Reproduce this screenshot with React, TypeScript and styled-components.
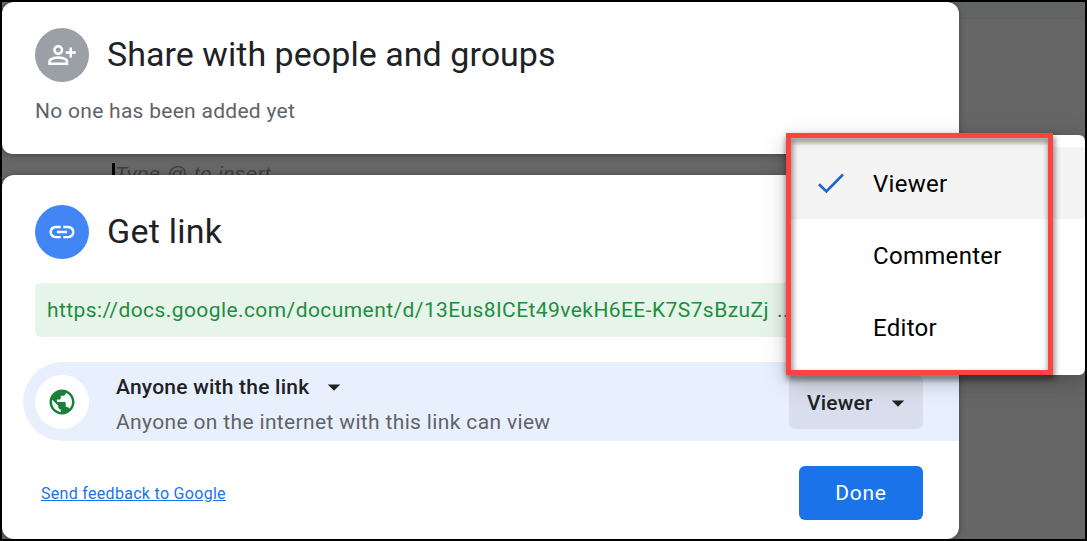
import React from "react";
import styled, { createGlobalStyle } from "styled-components";
import { MdArrowDropDown, MdLink, MdOutlinePersonAddAlt, MdPublic } from "react-icons/md";

const GlobalStyle = createGlobalStyle`
  * { box-sizing: border-box; }
  body { margin: 0; background: #000; font-family: Roboto, "Liberation Sans", sans-serif; }
  button { font-family: inherit; border: 0; padding: 0; background: none; }
`;

const Screen = styled.div`
  position: relative;
  width: 1087px;
  height: 541px;
  border: 2px solid #000;
  background: linear-gradient(#626563 0 16px, #5f605f 16px 17px, #666 17px);
  overflow: hidden;
`;

const Dialogs = styled.div`
  width: 957px;
  display: flex;
  flex-direction: column;
`;

const Card = styled.section<{ $height: number }>`
  position: relative;
  height: ${(p) => p.$height}px;
  border-radius: 12px;
  background: #fff;
  box-shadow: 0 1px 6px rgba(0, 0, 0, 0.35);
`;

const ShareCard = styled(Card)`
  padding: 26px 33px 0;
  border-bottom-left-radius: 10px;
`;

const LinkCard = styled(Card)`
  padding-top: 30px;
  display: flex;
  flex-direction: column;
`;

const DocumentLine = styled.div`
  height: 21px;
  padding: 9px 0 0 110px;
  display: flex;
`;

const Caret = styled.span`
  width: 3px;
  height: 24px;
  flex: none;
  background: #000;
`;

const Placeholder = styled.span`
  font: italic 20px/22px "Liberation Sans", sans-serif;
  letter-spacing: 0.65px;
  color: #3c3d3e;
  white-space: nowrap;
`;

const Heading = styled.header`
  display: flex;
  align-items: center;
  gap: 18px;
  height: 54px;
`;

const LinkHeading = styled(Heading)`
  padding-left: 33px;
`;

const Disc = styled.span<{ $bg: string; $fg: string }>`
  width: 54px;
  height: 54px;
  flex: none;
  border-radius: 50%;
  display: flex;
  align-items: center;
  justify-content: center;
  background: ${(p) => p.$bg};
  color: ${(p) => p.$fg};
`;

const Title = styled.h2<{ $spacing: number }>`
  margin: 0;
  padding-bottom: 2px;
  font-size: 34px;
  font-weight: 400;
  line-height: 48px;
  letter-spacing: ${(p) => p.$spacing}px;
  color: #202124;
  white-space: nowrap;
`;

const Note = styled.p`
  margin: 14px 0 0;
  font-size: 21px;
  line-height: 30px;
  letter-spacing: 0.28px;
  color: #5f6368;
`;

const UrlBox = styled.div`
  margin: 24px 36px 0 33px;
  height: 54px;
  padding-left: 12px;
  border-radius: 6px;
  background: #e6f4ea;
  display: flex;
  align-items: center;
  gap: 8px;
  font-size: 21px;
  letter-spacing: 0.42px;
  color: #1e8e3e;
  white-space: nowrap;
`;

const AccessRow = styled.div`
  margin: 25px 0 0 21px;
  height: 79px;
  padding: 0 36px 0 12px;
  border-radius: 40px 0 0 40px;
  background: #e8f0fe;
  display: flex;
  align-items: center;
`;

const AccessText = styled.div`
  flex: 1;
  margin-left: 27px;
  padding-top: 6px;
`;

const AccessScope = styled.button`
  display: flex;
  align-items: center;
  gap: 10px;
  height: 30px;
  font-size: 21px;
  font-weight: 500;
  letter-spacing: 0.22px;
  color: #202124;
`;

const AccessHint = styled.div`
  margin-top: 5px;
  height: 30px;
  font-size: 21px;
  line-height: 30px;
  letter-spacing: 0.35px;
  color: #5f6368;
`;

const RoleButton = styled.button`
  width: 134px;
  height: 54px;
  padding: 2px 0 0 18px;
  border-radius: 6px;
  background: #d8deeb;
  display: flex;
  align-items: center;
  gap: 10px;
  font-size: 21px;
  font-weight: 500;
  letter-spacing: 0.2px;
  color: #202124;
`;

const Footer = styled.footer`
  margin-top: 25px;
  padding: 0 36px 0 39px;
  display: flex;
  align-items: center;
  justify-content: space-between;
`;

const FeedbackLink = styled.a`
  font-size: 16px;
  letter-spacing: 0.3px;
  color: #1a73e8;
  text-decoration: underline;
`;

const DoneButton = styled.button`
  width: 124px;
  height: 54px;
  border-radius: 6px;
  background: #1a73e8;
  color: #fff;
  font-size: 21px;
  letter-spacing: 0.7px;
`;

const RoleMenu = styled.ul`
  position: absolute;
  top: 133px;
  right: 0;
  width: 298px;
  height: 240px;
  margin: 0;
  padding: 12px 0;
  list-style: none;
  border-radius: 6px;
  background: #fff;
  box-shadow: 0 6px 18px rgba(0, 0, 0, 0.17), 0 6px 30px 4px rgba(0, 0, 0, 0.08);
`;

const RoleOption = styled.li<{ $selected?: boolean }>`
  height: 72px;
  padding-top: 2px;
  padding-left: 30px;
  display: flex;
  align-items: center;
  background: ${(p) => (p.$selected ? "#f4f4f4" : "transparent")};
  font-size: 24px;
  letter-spacing: 0.3px;
  color: #000;
`;

const CheckSlot = styled.span`
  width: 56px;
  flex: none;
  display: flex;
  padding-bottom: 2px;
`;

const Highlight = styled.div`
  position: absolute;
  left: 784px;
  top: 131px;
  width: 267px;
  height: 242px;
  border: 5px solid #ff4343;
  filter: drop-shadow(1px 4px 3px rgba(0, 0, 0, 0.6));
`;

const roles = ["Viewer", "Commenter", "Editor"];

function CheckIcon() {
  return (
    <svg width="28" height="24" viewBox="0 0 28 24" fill="none">
      <path d="M2 13.2 9.4 20.5 26 3.5" stroke="#1967d2" strokeWidth="2.6" />
    </svg>
  );
}

export default function App() {
  return (
    <Screen>
      <GlobalStyle />
      <Dialogs>
        <ShareCard $height={152}>
          <Heading>
            <Disc $bg="#9aa0a6" $fg="#fff">
              <MdOutlinePersonAddAlt size={30} />
            </Disc>
            <Title $spacing={0.04}>Share with people and groups</Title>
          </Heading>
          <Note>No one has been added yet</Note>
        </ShareCard>
        <DocumentLine>
          <Caret />
          <Placeholder>Type @ to insert</Placeholder>
        </DocumentLine>
        <LinkCard $height={364}>
          <LinkHeading>
            <Disc $bg="#4285f4" $fg="#fff">
              <MdLink size={30} />
            </Disc>
            <Title $spacing={0.25}>Get link</Title>
          </LinkHeading>
          <UrlBox>
            <span>https://docs.google.com/document/d/13Eus8ICEt49vekH6EE-K7S7sBzuZj</span>
            <span>...</span>
          </UrlBox>
          <AccessRow>
            <Disc $bg="#fff" $fg="#188038">
              <MdPublic size={30} />
            </Disc>
            <AccessText>
              <AccessScope>
                <span>Anyone with the link</span>
                <MdArrowDropDown size={30} />
              </AccessScope>
              <AccessHint>Anyone on the internet with this link can view</AccessHint>
            </AccessText>
            <RoleButton>
              <span>Viewer</span>
              <MdArrowDropDown size={30} />
            </RoleButton>
          </AccessRow>
          <Footer>
            <FeedbackLink>Send feedback to Google</FeedbackLink>
            <DoneButton>Done</DoneButton>
          </Footer>
        </LinkCard>
      </Dialogs>
      <RoleMenu>
        {roles.map((role, i) => (
          <RoleOption key={role} $selected={i === 0}>
            <CheckSlot>{i === 0 && <CheckIcon />}</CheckSlot>
            {role}
          </RoleOption>
        ))}
      </RoleMenu>
      <Highlight />
    </Screen>
  );
}
